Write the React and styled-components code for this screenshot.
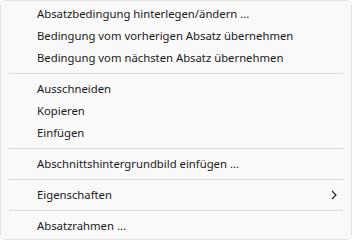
import React from 'react'
import styled, { createGlobalStyle } from 'styled-components'

const GlobalStyle = createGlobalStyle`
  body {
    margin: 0;
    background: #ffffff;
  }
`

const items = [
  ['Absatzbedingung hinterlegen/ändern ...', 'Bedingung vom vorherigen Absatz übernehmen', 'Bedingung vom nächsten Absatz übernehmen'],
  ['Ausschneiden', 'Kopieren', 'Einfügen'],
  ['Abschnittshintergrundbild einfügen ...'],
  [{ label: 'Eigenschaften', sub: true }],
  ['Absatzrahmen ...'],
]

const Chevron = () => (
  <svg width="6" height="10" viewBox="0 0 6 10">
    <path d="M1 1 L5 5 L1 9" fill="none" stroke="#1a1a1a" strokeWidth="1.1" />
  </svg>
)

const App = () => {
  return (
    <>
      <GlobalStyle />
      <Menu>
        {items.map((group, gi) => (
          <React.Fragment key={gi}>
            {gi > 0 && <Separator />}
            {group.map((it) => {
              const label = typeof it === 'string' ? it : it.label
              const sub = typeof it !== 'string' && it.sub
              return (
                <Item key={label}>
                  <Label>{label}</Label>
                  {sub && <Arrow><Chevron /></Arrow>}
                </Item>
              )
            })}
          </React.Fragment>
        ))}
      </Menu>
    </>
  )
}

export default App

const Menu = styled.div`
  box-sizing: border-box;
  width: 352px;
  height: 240px;
  padding: 2px 0;
  background: #f9f9f9;
  border: 1px solid #e3e3e3;
  border-radius: 7px;
  font-family: "Noto Sans", "Open Sans", sans-serif;
  font-size: 11.3px;
  color: #1a1a1a;
`
const Item = styled.div`
  display: flex;
  align-items: center;
  height: 22px;
  padding: 0 14px 0 36px;
`
const Label = styled.span`
  flex: 1;
  white-space: nowrap;
  line-height: 16px;
`
const Arrow = styled.span`
  display: flex;
  align-items: center;
`
const Separator = styled.div`
  height: 1px;
  margin: 4px 8px;
  background: #dadada;
`
